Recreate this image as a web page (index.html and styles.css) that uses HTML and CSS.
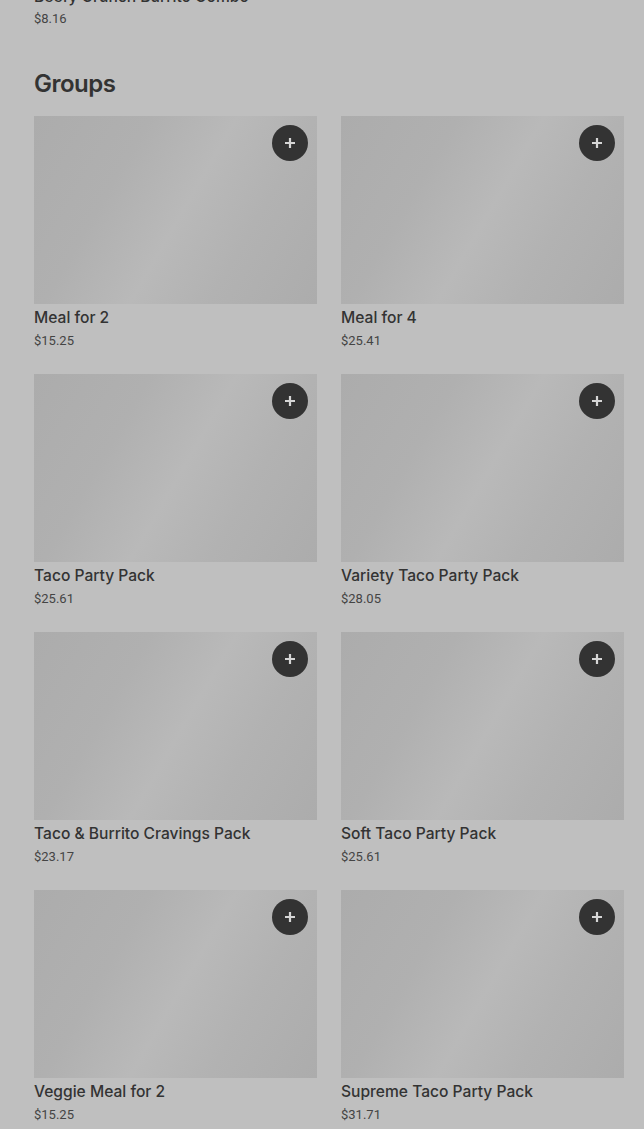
FILE: index.html
```html
<!DOCTYPE html>
<html lang="en">
<head>
  <meta charset="UTF-8">
  <title>Groups</title>
  <meta name="viewport" content="width=device-width, initial-scale=1">
  <link rel="stylesheet" href="styles.css">
</head>
<body>

<div class="menu">
  <div class="prev-item">
    <div class="item-title">Beefy Crunch Burrito Combo</div>
    <div class="item-price">$8.16</div>
  </div>

  <h2 class="section-title">Groups</h2>

  <div class="grid">
    <div class="card">
      <div class="thumb"><button class="add"><svg viewBox="0 0 16 16"><path d="M8 3v10M3 8h10"/></svg></button></div>
      <div class="item-title">Meal for 2</div>
      <div class="item-price">$15.25</div>
    </div>
    <div class="card">
      <div class="thumb"><button class="add"><svg viewBox="0 0 16 16"><path d="M8 3v10M3 8h10"/></svg></button></div>
      <div class="item-title">Meal for 4</div>
      <div class="item-price">$25.41</div>
    </div>
    <div class="card">
      <div class="thumb"><button class="add"><svg viewBox="0 0 16 16"><path d="M8 3v10M3 8h10"/></svg></button></div>
      <div class="item-title">Taco Party Pack</div>
      <div class="item-price">$25.61</div>
    </div>
    <div class="card">
      <div class="thumb"><button class="add"><svg viewBox="0 0 16 16"><path d="M8 3v10M3 8h10"/></svg></button></div>
      <div class="item-title">Variety Taco Party Pack</div>
      <div class="item-price">$28.05</div>
    </div>
    <div class="card">
      <div class="thumb"><button class="add"><svg viewBox="0 0 16 16"><path d="M8 3v10M3 8h10"/></svg></button></div>
      <div class="item-title">Taco &amp; Burrito Cravings Pack</div>
      <div class="item-price">$23.17</div>
    </div>
    <div class="card">
      <div class="thumb"><button class="add"><svg viewBox="0 0 16 16"><path d="M8 3v10M3 8h10"/></svg></button></div>
      <div class="item-title">Soft Taco Party Pack</div>
      <div class="item-price">$25.61</div>
    </div>
    <div class="card">
      <div class="thumb"><button class="add"><svg viewBox="0 0 16 16"><path d="M8 3v10M3 8h10"/></svg></button></div>
      <div class="item-title">Veggie Meal for 2</div>
      <div class="item-price">$15.25</div>
    </div>
    <div class="card">
      <div class="thumb"><button class="add"><svg viewBox="0 0 16 16"><path d="M8 3v10M3 8h10"/></svg></button></div>
      <div class="item-title">Supreme Taco Party Pack</div>
      <div class="item-price">$31.71</div>
    </div>
  </div>
</div>

</body>
</html>
```

FILE: styles.css
```css
body {
  margin: 0;
  padding: 0;
  background: #bfbfbf;
  font-family: "Inter", "Liberation Sans", sans-serif;
  color: #333;
}

.menu {
  padding: 0 20px 0 34px;
}

.prev-item {
  margin-top: -13px;
}

.prev-item .item-price {
  margin-top: 2px;
}

.item-title {
  font-size: 15.6px;
  font-weight: 500;
  line-height: 20px;
  color: #333;
}

.item-price {
  font-family: "Roboto", "Liberation Sans", sans-serif;
  font-size: 13px;
  line-height: 20px;
  color: #444;
  margin-top: 3px;
}

.section-title {
  font-size: 24px;
  font-weight: 600;
  letter-spacing: -0.5px;
  line-height: 32px;
  margin: 39px 0 16px;
  color: #333;
}

.grid {
  display: grid;
  grid-template-columns: 283px 283px;
  column-gap: 24px;
  row-gap: 23px;
}

.card .item-title {
  margin-top: 4px;
}

.thumb {
  position: relative;
  height: 188px;
  background: linear-gradient(120deg, #acacac 0%, #b0b0b0 30%, #b9b9b9 52%, #b2b2b2 72%, #acacac 100%);
}

.add {
  position: absolute;
  top: 9px;
  right: 9px;
  width: 36px;
  height: 36px;
  border-radius: 50%;
  border: none;
  background: #333;
  padding: 0;
  display: flex;
  align-items: center;
  justify-content: center;
  cursor: pointer;
}

.add svg {
  width: 16px;
  height: 16px;
  stroke: #d6d6d6;
  stroke-width: 2.2;
  fill: none;
}
```
